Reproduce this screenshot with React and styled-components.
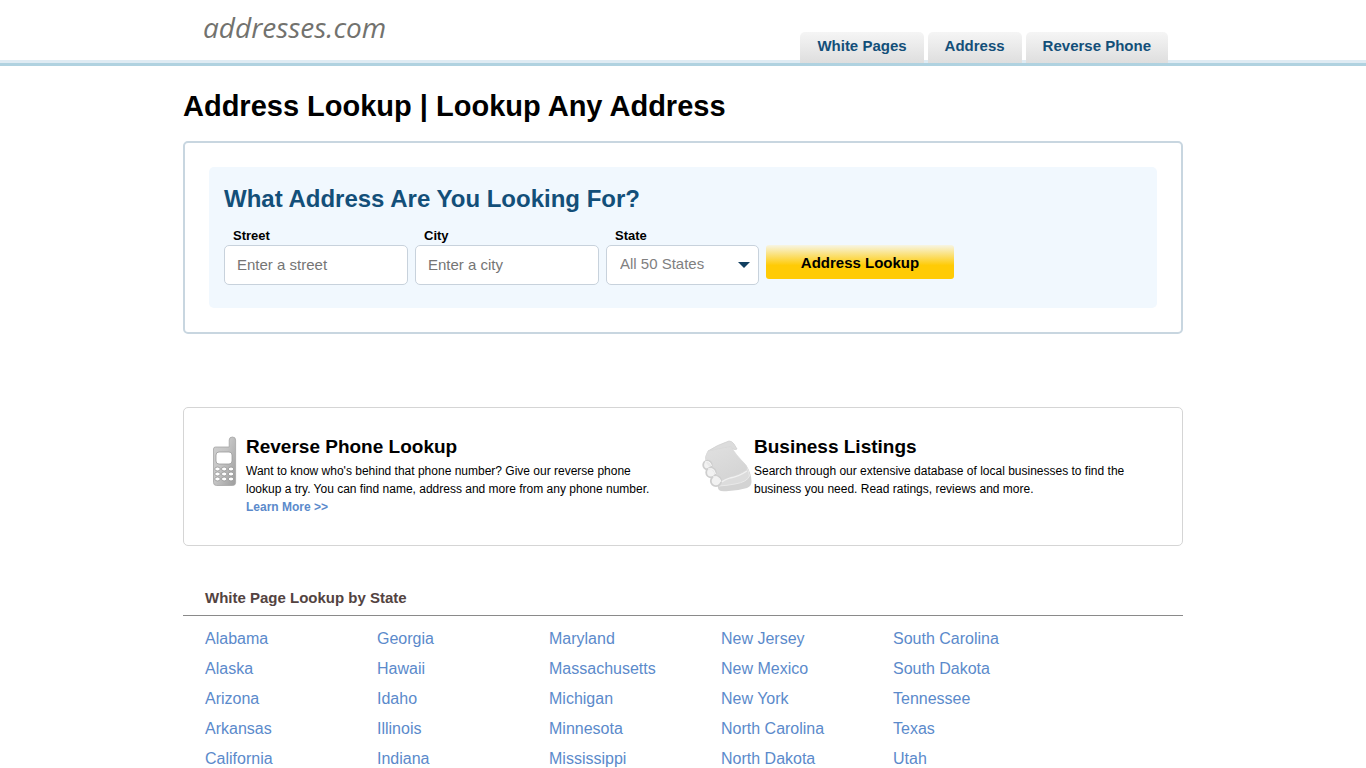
import React, { useState } from 'react';
import styled, { createGlobalStyle } from 'styled-components';

const GlobalStyle = createGlobalStyle`
  * {
    box-sizing: border-box;
  }
  body {
    margin: 0;
    background: #fff;
    color: #000;
    font-family: "Liberation Sans", Arial, sans-serif;
  }
  a {
    text-decoration: none;
  }
`;

// Header
const Header = styled.header`
  background: linear-gradient(#dfebf3, #dfebf3) bottom / 100% 3px no-repeat;
  border-bottom: 3px solid #b0d2e0;
`;

const HeaderInner = styled.div`
  display: flex;
  align-items: flex-end;
  justify-content: space-between;
  max-width: 1000px;
  height: 63px;
  margin: 0 auto;
  padding: 0 15px 0 20px;
`;

const Logo = styled.a`
  align-self: flex-start;
  padding-top: 8px;
  color: #72726e;
  font: italic 500 28px/38px "Open Sans", sans-serif;
`;

const Nav = styled.nav`
  display: flex;
  gap: 4px;
`;

const Tab = styled.a`
  height: 31px;
  padding: 0 17px;
  border-radius: 5px 5px 0 0;
  background: linear-gradient(#f5f5f5, #dedede);
  color: #134f79;
  font-size: 15px;
  font-weight: bold;
  line-height: 28px;
`;

const Main = styled.main`
  max-width: 1000px;
  margin: 0 auto;
`;

const PageTitle = styled.h1`
  margin: 0;
  padding: 22px 0 17px;
  font-size: 29px;
  line-height: 36px;
`;

// Search form
const SearchPanel = styled.section`
  padding: 24px;
  border: 2px solid #c8d6e0;
  border-radius: 5px;
`;

const SearchForm = styled.form`
  padding: 16px 15px 23px;
  border-radius: 5px;
  background: #f1f8fe;
`;

const SearchTitle = styled.h2`
  margin: 0 0 12px;
  color: #134f79;
  font-size: 24px;
  line-height: 32px;
`;

const Fields = styled.div`
  display: flex;
  flex-wrap: wrap;
  gap: 7px;
`;

const Field = styled.div`
  width: ${(props) => props.$width};
`;

const Label = styled.label`
  display: block;
  padding-left: 9px;
  font-size: 13px;
  font-weight: bold;
  line-height: 18px;
`;

const TextInput = styled.input`
  display: block;
  width: 100%;
  height: 40px;
  padding: 0 12px 2px;
  border: 1px solid #c8d2dc;
  border-radius: 5px;
  background: #fff;
  font: 15px "Liberation Sans", Arial, sans-serif;
  &::placeholder {
    color: #757575;
  }
`;

const SelectBox = styled.div`
  position: relative;
`;

const Select = styled.select`
  display: block;
  width: 100%;
  height: 40px;
  padding: 0 32px 4px 13px;
  border: 1px solid #c8d2dc;
  border-radius: 5px;
  appearance: none;
  background: #fff;
  color: #808080;
  font: 15px "Liberation Sans", Arial, sans-serif;
`;

const SelectArrow = styled.svg`
  position: absolute;
  top: 17px;
  right: 9px;
  pointer-events: none;
`;

const SubmitButton = styled.button`
  width: 188px;
  height: 34px;
  margin-top: 18px;
  border: 0;
  border-radius: 3px;
  background: linear-gradient(#f7f5e4 0%, #ffcb05 60%, #ffcb05 100%);
  color: #000;
  font: bold 15px "Liberation Sans", Arial, sans-serif;
  cursor: pointer;
`;

// Promo box
const Promos = styled.section`
  display: grid;
  grid-template-columns: 491px 1fr;
  margin-top: 73px;
  padding: 27px 27px 29px;
  border: 1px solid #d5d5d5;
  border-radius: 5px;
`;

const Promo = styled.article`
  display: flex;
`;

const PromoIcon = styled.div`
  flex: none;
  width: ${(props) => props.$width};
`;

const PromoTitle = styled.h3`
  margin: 0 0 4px;
  font-size: 19px;
  line-height: 23px;
`;

const PromoText = styled.p`
  max-width: 410px;
  margin: 0;
  font-size: 12px;
  line-height: 18px;
`;

const PromoLink = styled.a`
  display: block;
  color: #5b8acb;
  font-size: 12px;
  font-weight: bold;
  line-height: 18px;
`;

// States
const StatesTitle = styled.h4`
  margin: 41px 0 0;
  padding: 0 22px 6px;
  border-bottom: 1px solid #8a8a8a;
  color: #534341;
  font-size: 15px;
  line-height: 22px;
`;

const StateColumns = styled.div`
  display: flex;
  padding: 8px 22px 0;
`;

const StateList = styled.ul`
  width: 172px;
  margin: 0;
  padding: 0;
  list-style: none;
`;

const StateLink = styled.a`
  color: #5b8acb;
  font-size: 16px;
  line-height: 30px;
`;

const tabs = ['White Pages', 'Address', 'Reverse Phone'];

const stateColumns = [
  ['Alabama', 'Alaska', 'Arizona', 'Arkansas', 'California'],
  ['Georgia', 'Hawaii', 'Idaho', 'Illinois', 'Indiana'],
  ['Maryland', 'Massachusetts', 'Michigan', 'Minnesota', 'Mississippi'],
  ['New Jersey', 'New Mexico', 'New York', 'North Carolina', 'North Dakota'],
  ['South Carolina', 'South Dakota', 'Tennessee', 'Texas', 'Utah'],
];

const PhoneIcon = () => (
  <svg width="26" height="52" viewBox="0 0 26 52" aria-hidden="true">
    <defs>
      <linearGradient id="phoneBody" x1="0" y1="0" x2="1" y2="0.8">
        <stop offset="0" stopColor="#d0d0d0" />
        <stop offset="0.5" stopColor="#c4c4c4" />
        <stop offset="1" stopColor="#a2a2a2" />
      </linearGradient>
    </defs>
    <path
      d="M4.5 12H18.2V5Q18.200 2 21.400 2Q24.600 2 24.600 5V47.500Q24.600 50.500 21.600 50.500H5.500Q2.500 50.500 2.500 47.500V14Q2.500 12 4.500 12Z"
      fill="url(#phoneBody)"
      stroke="#a6a6a6"
      strokeWidth="0.8"
    />
    <rect x="5" y="17" width="16" height="12" rx="3" fill="#fff" stroke="#999" strokeWidth="0.8" />
    {[34, 39, 44].map((y) =>
      [6.5, 13.2, 20].map((x) => (
        <ellipse key={`${x}-${y}`} cx={x} cy={y} rx="2.7" ry="1.9" fill="#fff" stroke="#8c8c8c" strokeWidth="0.7" />
      ))
    )}
  </svg>
);

const NotebookIcon = () => (
  <svg width="52" height="58" viewBox="0 0 52 58" aria-hidden="true">
    <defs>
      <linearGradient id="bookCover" x1="0" y1="0" x2="0.6" y2="1">
        <stop offset="0" stopColor="#e0e0e0" />
        <stop offset="1" stopColor="#d4d4d4" />
      </linearGradient>
    </defs>
    {/* back cover and pages */}
    <path d="M44 30Q49 37 49.500 46Q50 51 45 53Q32 57 19 56Q15 55 16 50Z" fill="#d3d3d3" />
    <path d="M44 31Q47 36 47.500 41Q45 47 33 49Q25 50.500 17 51L20 45Z" fill="#dcdcdc" stroke="#e9e9e9" />
    {/* top flap */}
    <path d="M6 16Q15 10 27 6Q30 6 32 9L35 14Q33 15 31 14L10 20Z" fill="#dcdcdc" stroke="#d0d0d0" strokeWidth="0.8" />
    {/* front cover */}
    <path
      d="M6 16Q15 14 29 11.500Q33 19 43 29Q46 32 44.500 35Q37 40 29 42Q21 45 19 46L4 27Q2 22 6 16Z"
      fill="url(#bookCover)"
      stroke="#d8d8d8"
      strokeWidth="0.8"
    />
    <path d="M45 36Q36 42 28 43Q22 45 20 47" fill="none" stroke="#f1f1f1" strokeWidth="1.3" />
    {/* rings */}
    <g fill="#ededed" fillOpacity="0.75" stroke="#cecece" strokeWidth="1.8">
      <circle cx="5.500" cy="30" r="4.300" />
      <circle cx="9" cy="37.500" r="4.800" />
      <circle cx="14" cy="46" r="5.200" />
    </g>
    <g fill="none" stroke="#f8f8f8" strokeWidth="1">
      <path d="M3 27Q8 25 9.500 31" />
      <path d="M6 34Q12 32 13.500 39" />
      <path d="M11 42Q17 40 19 47" />
    </g>
  </svg>
);

const App = () => {
  const [street, setStreet] = useState('');
  const [city, setCity] = useState('');
  const [state, setState] = useState('');

  return (
    <>
      <GlobalStyle />
      <Header>
        <HeaderInner>
          <Logo href="#">addresses.com</Logo>
          <Nav>
            {tabs.map((tab) => (
              <Tab key={tab} href="#">{tab}</Tab>
            ))}
          </Nav>
        </HeaderInner>
      </Header>

      <Main>
        <PageTitle>Address Lookup | Lookup Any Address</PageTitle>

        <SearchPanel>
          <SearchForm onSubmit={(e) => e.preventDefault()}>
            <SearchTitle>What Address Are You Looking For?</SearchTitle>
            <Fields>
              <Field $width="184px">
                <Label htmlFor="street">Street</Label>
                <TextInput id="street" placeholder="Enter a street" value={street} onChange={(e) => setStreet(e.target.value)} />
              </Field>
              <Field $width="184px">
                <Label htmlFor="city">City</Label>
                <TextInput id="city" placeholder="Enter a city" value={city} onChange={(e) => setCity(e.target.value)} />
              </Field>
              <Field $width="153px">
                <Label htmlFor="state">State</Label>
                <SelectBox>
                  <Select id="state" value={state} onChange={(e) => setState(e.target.value)}>
                    <option value="">All 50 States</option>
                    {stateColumns.flat().map((name) => (
                      <option key={name} value={name}>{name}</option>
                    ))}
                  </Select>
                  <SelectArrow width="12" height="6" viewBox="0 0 12 6" aria-hidden="true">
                    <path d="M0 0H12L6 6Z" fill="#123f60" />
                  </SelectArrow>
                </SelectBox>
              </Field>
              <SubmitButton type="submit">Address Lookup</SubmitButton>
            </Fields>
          </SearchForm>
        </SearchPanel>

        <Promos>
          <Promo>
            <PromoIcon $width="35px">
              <PhoneIcon />
            </PromoIcon>
            <div>
              <PromoTitle>Reverse Phone Lookup</PromoTitle>
              <PromoText>
                Want to know who's behind that phone number? Give our reverse phone lookup a try. You can find name, address and more from any phone number.
              </PromoText>
              <PromoLink href="#">Learn More &gt;&gt;</PromoLink>
            </div>
          </Promo>
          <Promo>
            <PromoIcon $width="52px">
              <NotebookIcon />
            </PromoIcon>
            <div>
              <PromoTitle>Business Listings</PromoTitle>
              <PromoText>
                Search through our extensive database of local businesses to find the business you need. Read ratings, reviews and more.
              </PromoText>
            </div>
          </Promo>
        </Promos>

        <StatesTitle>White Page Lookup by State</StatesTitle>
        <StateColumns>
          {stateColumns.map((column) => (
            <StateList key={column[0]}>
              {column.map((name) => (
                <li key={name}>
                  <StateLink href="#">{name}</StateLink>
                </li>
              ))}
            </StateList>
          ))}
        </StateColumns>
      </Main>
    </>
  );
};

export default App;
